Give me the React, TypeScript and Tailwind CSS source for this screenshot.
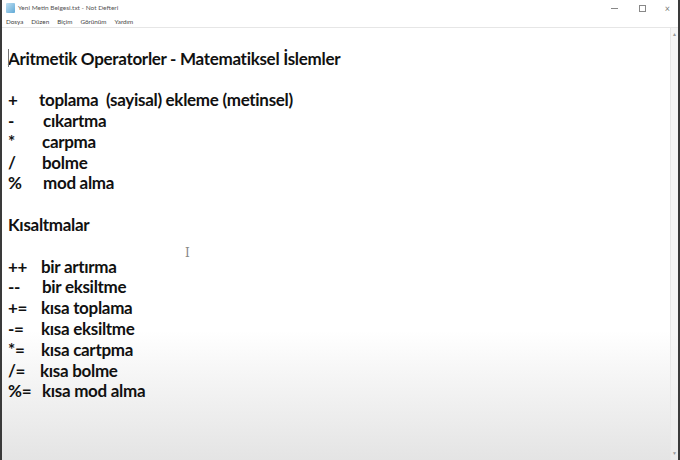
import React from 'react';

type Row = { sym: string; text: string; gap: string };

const ops: Row[] = [
  { sym: '+', text: 'toplama  (sayisal) ekleme (metinsel)', gap: 'w-[31px]' },
  { sym: '-', text: 'cıkartma', gap: 'w-[35px]' },
  { sym: '*', text: 'carpma', gap: 'w-[34px]' },
  { sym: '/', text: 'bolme', gap: 'w-[34px]' },
  { sym: '%', text: 'mod alma', gap: 'w-[35px]' },
];

const shorts: Row[] = [
  { sym: '++', text: 'bir artırma', gap: 'w-[33px]' },
  { sym: '--', text: 'bir eksiltme', gap: 'w-[34px]' },
  { sym: '+=', text: 'kısa toplama', gap: 'w-[33px]' },
  { sym: '-=', text: 'kısa eksiltme', gap: 'w-[33px]' },
  { sym: '*=', text: 'kısa cartpma', gap: 'w-[33px]' },
  { sym: '/=', text: 'kısa bolme', gap: 'w-[32px]' },
  { sym: '%=', text: 'kısa mod alma', gap: 'w-[34px]' },
];

function Line({ row }: { row: Row }) {
  return (
    <div className="flex h-[20.8px] items-center whitespace-pre">
      <span className={`${row.gap} shrink-0`}>{row.sym}</span>
      <span>{row.text}</span>
    </div>
  );
}

export default function App() {
  return (
    <div className="flex h-[460px] w-[680px] flex-col overflow-hidden border-l-[2px] border-r-[2px] border-[#3a3a3a] bg-white font-['Lato','Liberation_Sans',sans-serif]">
      {/* title bar */}
      <div className="flex h-[16px] items-center">
        <div className="ml-[4px] h-[10px] w-[9px] rounded-[1px] bg-gradient-to-br from-[#bfe0f2] to-[#5fa9d6]" />
        <span className="ml-[3px] text-[6.5px] text-[#555]">Yeni Metin Belgesi.txt - Not Defteri</span>
        <div className="ml-auto flex items-center text-[#777]">
          <div className="mr-[21px] h-px w-[7px] bg-[#888]" />
          <div className="mr-[19px] h-[7px] w-[7px] border border-[#888]" />
          <span className="mr-[8px] text-[9px] leading-none">×</span>
        </div>
      </div>
      {/* menu bar */}
      <div className="flex h-[12px] items-center gap-[8px] border-b border-[#e6e6e6] pl-[4px] text-[6.3px] text-[#444]">
        <span>Dosya</span>
        <span>Düzen</span>
        <span>Biçim</span>
        <span>Görünüm</span>
        <span>Yardım</span>
      </div>
      {/* editor */}
      <div className="flex flex-1 bg-gradient-to-b from-white via-white via-70% to-[#e4e4e4]">
        <div className="relative flex-1 pl-[6px] pt-[20px] text-[17px] font-bold tracking-[-0.3px] text-[#111]">
          <div className="absolute left-[6px] top-[21px] h-[18px] w-px bg-[#777]" />
          <div className="flex h-[20.8px] items-center">Aritmetik Operatorler - Matematiksel İslemler</div>
          <div className="h-[20.8px]" />
          {ops.map((r) => (
            <Line key={r.sym} row={r} />
          ))}
          <div className="h-[20.8px]" />
          <div className="flex h-[20.8px] items-center">Kısaltmalar</div>
          <div className="h-[20.8px]" />
          {shorts.map((r) => (
            <Line key={r.sym} row={r} />
          ))}
          <span className="absolute left-[183px] top-[216px] text-[12px] font-normal text-[#888] font-['DejaVu_Serif',serif]">I</span>
        </div>
        {/* scrollbar */}
        <div className="flex w-[8px] flex-col items-center justify-between border-l border-[#e8e8e8] bg-[#f0f0f0]/60 py-[3px] text-[5px] text-[#999]">
          <span>▲</span>
          <span>▼</span>
        </div>
      </div>
    </div>
  );
}
